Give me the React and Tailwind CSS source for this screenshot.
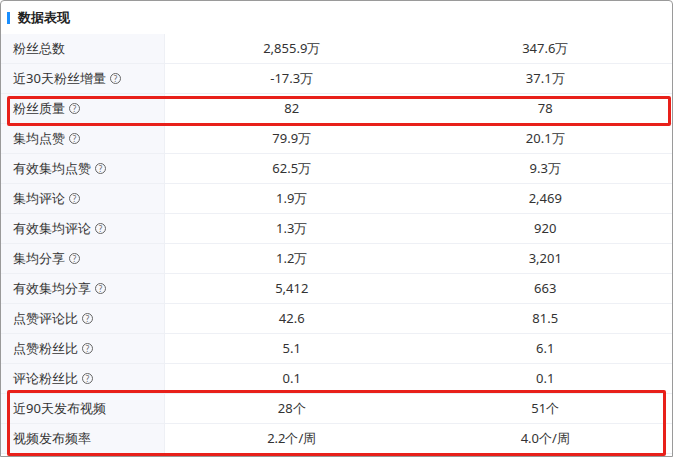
const rows = [
  ["粉丝总数", false, "2,855.9万", "347.6万"],
  ["近30天粉丝增量", true, "-17.3万", "37.1万"],
  ["粉丝质量", true, "82", "78"],
  ["集均点赞", true, "79.9万", "20.1万"],
  ["有效集均点赞", true, "62.5万", "9.3万"],
  ["集均评论", true, "1.9万", "2,469"],
  ["有效集均评论", true, "1.3万", "920"],
  ["集均分享", true, "1.2万", "3,201"],
  ["有效集均分享", true, "5,412", "663"],
  ["点赞评论比", true, "42.6", "81.5"],
  ["点赞粉丝比", true, "5.1", "6.1"],
  ["评论粉丝比", true, "0.1", "0.1"],
  ["近90天发布视频", false, "28个", "51个"],
  ["视频发布频率", false, "2.2个/周", "4.0个/周"],
];

function Q() {
  return (
    <span className="ml-1 inline-flex h-[11px] w-[11px] items-center justify-center rounded-full border border-[#666] text-[8px] leading-none text-[#666]">
      ?
    </span>
  );
}

export default function App() {
  return (
    <div className="w-[675px] h-[461px] bg-white font-['Noto_Sans_CJK_SC',sans-serif] text-[13px] text-[#333]">
      <div className="w-[673px] h-[457px] border border-[#9a9a9a] rounded-t-[4px] overflow-hidden">
        <div className="flex h-[33px] items-center pl-[6px] gap-[8px]">
          <span className="h-[12px] w-[3px] bg-[#1a8fff]" />
          <span className="font-bold text-[13px] text-[#222]">数据表现</span>
        </div>
        <div className="relative">
          {rows.map(([k, q, a, b], i) => (
            <div key={i} className="flex h-[30px] items-center border-b border-[#eef0f5]">
              <div className="flex h-full w-[164px] items-center bg-[#f7f8fc] pl-[12px] border-r border-[#eef0f5]">
                {k}
                {q && <Q />}
              </div>
              <div className="flex-1 text-center">{a}</div>
              <div className="flex-1 text-center">{b}</div>
            </div>
          ))}
          <div className="absolute left-[6px] top-[62px] h-[30px] w-[664px] border-[3px] border-[#e8201a] rounded-[2px]" />
          <div className="absolute left-[6px] top-[356px] h-[66px] w-[659px] border-[3px] border-[#e8201a] rounded-[2px]" />
        </div>
      </div>
    </div>
  );
}
